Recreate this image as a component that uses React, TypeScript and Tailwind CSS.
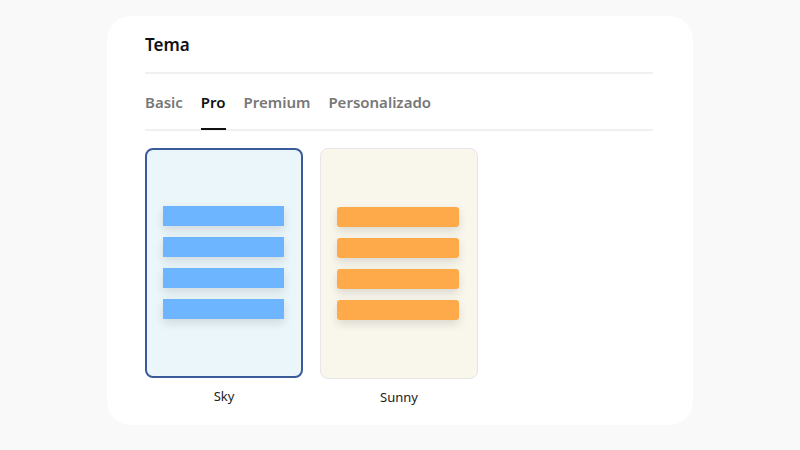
import React from "react";

function Bars({ color, rounded }: { color: string; rounded: boolean }) {
  return (
    <div className="flex flex-col gap-[11px] w-full">
      {[0, 1, 2, 3].map((i) => (
        <div
          key={i}
          className={`h-[20px] w-full shadow-[0_4px_10px_rgba(0,0,0,0.12)] ${rounded ? "rounded-[3px]" : ""}`}
          style={{ backgroundColor: color }}
        />
      ))}
    </div>
  );
}

export default function App() {
  const tabs = ["Basic", "Pro", "Premium", "Personalizado"];
  return (
    <div className="w-[800px] h-[450px] bg-[#f9f9f9] pt-[16px] pl-[107px]" style={{ fontFamily: '"Noto Sans", sans-serif' }}>
      <div className="w-[586px] h-[409px] bg-white rounded-[24px] pt-[15px] pl-[38px] pr-[40px]">
        <div className="text-[17px] font-semibold text-[#111] leading-[28px]">Tema</div>
        <div className="h-[2px] bg-[#f0f0f0] mt-[13px]" />
        <div className="flex gap-[18px] mt-[14px]">
          {tabs.map((t) => (
            <div key={t} className="flex flex-col items-center">
              <span className={`text-[15px] font-semibold leading-[28px] ${t === "Pro" ? "text-[#111]" : "text-[#777]"}`}>{t}</span>
              <div className={`h-[2px] w-full mt-[12px] ${t === "Pro" ? "bg-[#111]" : "bg-transparent"}`} />
            </div>
          ))}
        </div>
        <div className="h-[2px] bg-[#f0f0f0] -mt-[1px]" />
        <div className="flex gap-[17px] mt-[17px]">
          <div className="flex flex-col items-center w-[158px]">
            <div className="w-[158px] h-[230px] rounded-[8px] border-2 border-[#3b5a9a] bg-[#ebf6fb] flex items-center pl-[16px] pr-[17px] pb-[2px]">
              <Bars color="#6db5ff" rounded={false} />
            </div>
            <div className="text-[13px] text-[#222] mt-[9px]">Sky</div>
          </div>
          <div className="flex flex-col items-center w-[158px]">
            <div className="w-[158px] h-[231px] rounded-[8px] border border-[#e6e6e6] bg-[#f9f6ec] flex items-center pl-[16px] pr-[18px]">
              <Bars color="#ffaa4a" rounded={true} />
            </div>
            <div className="text-[13px] text-[#222] mt-[9px]">Sunny</div>
          </div>
        </div>
      </div>
    </div>
  );
}
